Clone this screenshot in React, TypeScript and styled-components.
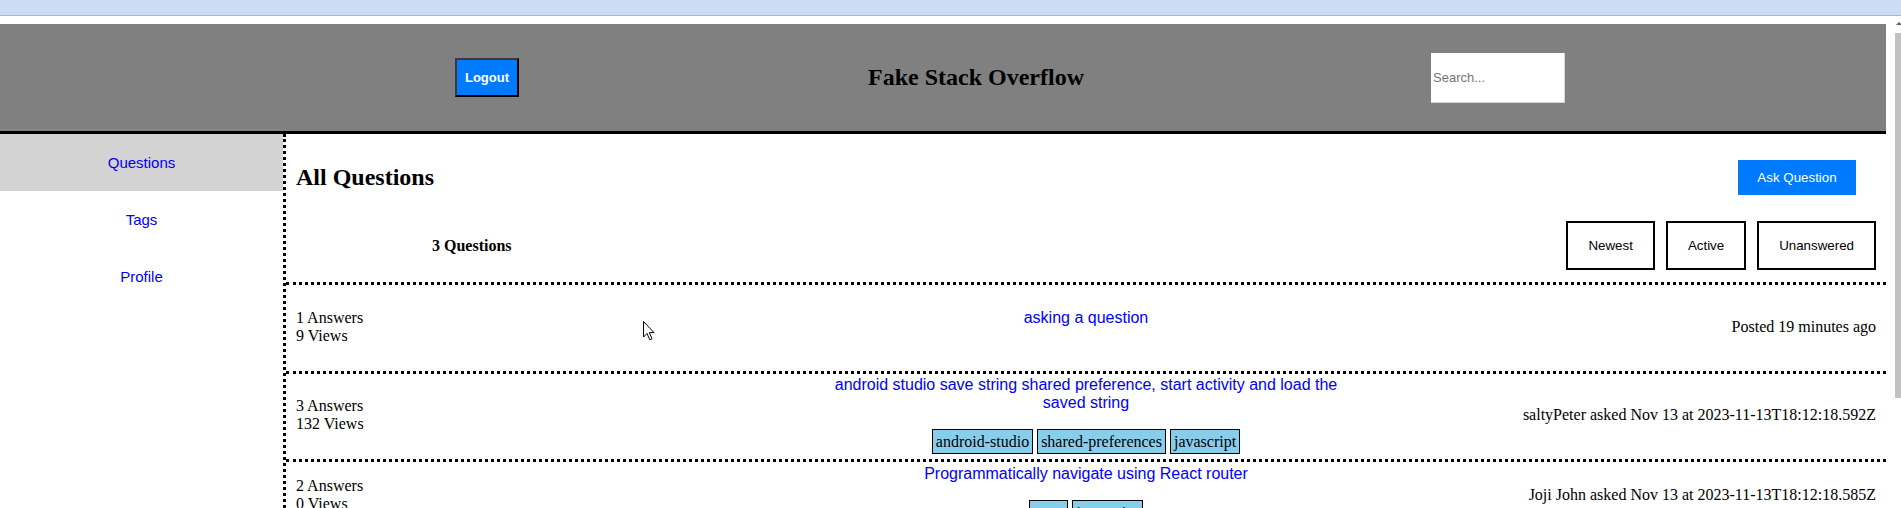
import React from "react";
import styled, { createGlobalStyle } from "styled-components";

const GlobalStyle = createGlobalStyle`
  html, body {
    margin: 0;
    padding: 0;
    overflow: hidden;
    background: #ffffff;
  }
  body {
    font-family: "Liberation Serif", "Times New Roman", serif;
    font-size: 16px;
    color: #000;
  }
  * { box-sizing: border-box; }
`;

const Window = styled.div`
  position: relative;
  height: 508px;
  display: flex;
  flex-direction: column;
  overflow: hidden;
`;

const BookmarkBar = styled.div`
  height: 16px;
  flex-shrink: 0;
  background: #cbdcf4;
  border-bottom: 1px solid #a8b8d4;
  display: flex;
  align-items: flex-start;
`;

const BookmarkBit = styled.span<{ $left: number; $color: string; $w?: number }>`
  margin-left: ${(p) => p.$left}px;
  width: ${(p) => p.$w ?? 4}px;
  height: 3px;
  background: ${(p) => p.$color};
  border-radius: 0 0 2px 2px;
`;

const Viewport = styled.div`
  flex: 1;
  min-height: 0;
  display: flex;
`;

const Page = styled.div`
  flex: 1;
  min-width: 0;
  padding-top: 8px;
  display: flex;
  flex-direction: column;
`;

const Header = styled.header`
  height: 110px;
  flex-shrink: 0;
  background: #808080;
  border-bottom: 3px solid #000;
  display: flex;
  align-items: center;
  padding-left: 455px;
`;

const LogoutButton = styled.button`
  width: 64px;
  height: 39px;
  background: #007bff;
  color: #fff;
  border: 2px solid;
  border-color: #3a3a3a #000 #000 #3a3a3a;
  font-family: "Liberation Sans", Arial, sans-serif;
  font-size: 13px;
  font-weight: bold;
  padding: 0;
`;

const SiteTitle = styled.h1`
  margin: 0 0 0 349px;
  font-size: 24px;
  font-weight: bold;
  font-family: "Liberation Serif", "Times New Roman", serif;
`;

const SearchInput = styled.input`
  margin-left: auto;
  margin-right: 321px;
  width: 134px;
  height: 50px;
  border: none;
  border-right: 1px solid #d8d8d8;
  border-bottom: 1px solid #d8d8d8;
  padding: 0 2px;
  font-family: "Liberation Sans", Arial, sans-serif;
  font-size: 13px;
  background: #fff;
  &::placeholder { color: #757575; }
`;

const Content = styled.div`
  flex: 1;
  min-height: 0;
  display: flex;
`;

const Sidebar = styled.nav`
  width: 286px;
  flex-shrink: 0;
  border-right: 3px dotted #000;
  display: flex;
  flex-direction: column;
`;

const NavItem = styled.div<{ $active?: boolean }>`
  height: 57px;
  display: flex;
  align-items: center;
  justify-content: center;
  background: ${(p) => (p.$active ? "#d3d3d3" : "transparent")};
  color: #0000ff;
  font-family: "Liberation Sans", Arial, sans-serif;
  font-size: 15px;
`;

const Main = styled.main`
  flex: 1;
  min-width: 0;
  overflow: hidden;
`;

const TopBar = styled.div`
  height: 86px;
  display: flex;
  align-items: center;
  justify-content: space-between;
  padding: 0 30px 0 10px;
`;

const PageTitle = styled.h2`
  margin: 0;
  font-size: 24px;
  font-weight: bold;
`;

const AskButton = styled.button`
  width: 118px;
  height: 35px;
  background: #007bff;
  color: #fff;
  border: none;
  padding: 0;
  font-family: "Liberation Sans", Arial, sans-serif;
  font-size: 13.33px;
`;

const FilterBar = styled.div`
  height: 65px;
  display: flex;
  align-items: center;
  padding: 1px 10px 12px;
  border-bottom: 3px dotted #000;
`;

const QuestionCount = styled.div`
  margin-left: 136px;
  font-weight: bold;
  font-size: 16px;
`;

const FilterGroup = styled.div`
  margin-left: auto;
  display: flex;
  gap: 11px;
`;

const FilterButton = styled.button`
  height: 49px;
  padding: 0 20px;
  border: 2px solid #000;
  background: #fff;
  color: #000;
  font-family: "Liberation Sans", Arial, sans-serif;
  font-size: 13.33px;
`;

const QuestionRow = styled.div<{ $tall: boolean }>`
  display: grid;
  grid-template-columns: 1fr 1fr 1fr;
  align-items: center;
  min-height: ${(p) => (p.$tall ? 89 : 72)}px;
  padding: 2px 10px 5px;
  border-bottom: 3px dotted #000;
`;

const Stats = styled.div`
  display: flex;
  flex-direction: column;
  line-height: 18px;
`;

const Middle = styled.div`
  display: flex;
  flex-direction: column;
  align-items: center;
  text-align: center;
`;

const TitleLink = styled.a`
  color: #0000ff;
  text-decoration: none;
  font-family: "Liberation Sans", Arial, sans-serif;
  font-size: 16px;
  line-height: 18px;
`;

const TagList = styled.div`
  margin-top: 17px;
  display: flex;
  gap: 4px;
  justify-content: center;
  flex-wrap: wrap;
`;

const Tag = styled.span`
  background: #87ceeb;
  border: 1px solid #000;
  padding: 2px 3px;
  line-height: 19px;
  font-size: 16px;
`;

const Meta = styled.div`
  text-align: right;
  line-height: 18px;
`;

const Scrollbar = styled.div`
  width: 15px;
  flex-shrink: 0;
  background: #fff;
  display: flex;
  flex-direction: column;
  align-items: flex-end;
  padding-top: 6px;
`;

const ScrollArrow = styled.span`
  width: 0;
  height: 0;
  border-left: 3px solid transparent;
  border-right: 3px solid transparent;
  border-bottom: 3px solid #606060;
  margin-right: -1px;
`;

const ScrollThumb = styled.div`
  margin-top: 8px;
  width: 6px;
  height: 365px;
  background: #c1c1c1;
`;

const Cursor = styled.svg`
  position: absolute;
  left: 643px;
  top: 321px;
  pointer-events: none;
`;

type Question = {
  answers: number;
  views: number;
  title: string;
  tags: string[];
  meta: string;
};

const questions: Question[] = [
  { answers: 1, views: 9, title: "asking a question", tags: [], meta: "Posted 19 minutes ago" },
  {
    answers: 3,
    views: 132,
    title:
      "android studio save string shared preference, start activity and load the saved string",
    tags: ["android-studio", "shared-preferences", "javascript"],
    meta: "saltyPeter asked Nov 13 at 2023-11-13T18:12:18.592Z",
  },
  {
    answers: 2,
    views: 0,
    title: "Programmatically navigate using React router",
    tags: ["react", "javascript"],
    meta: "Joji John asked Nov 13 at 2023-11-13T18:12:18.585Z",
  },
];

export default function App() {
  return (
    <>
      <GlobalStyle />
      <Window>
        <BookmarkBar>
          <BookmarkBit $left={6} $color="#4a90e2" />
          <BookmarkBit $left={206} $color="#333" $w={3} />
          <BookmarkBit $left={106} $color="#f5a623" />
          <BookmarkBit $left={138} $color="#9b4dff" $w={6} />
          <BookmarkBit $left={440} $color="#4a90e2" $w={3} />
          <BookmarkBit $left={250} $color="#f5a623" />
          <BookmarkBit $left={510} $color="#ff4a1a" $w={5} />
          <BookmarkBit $left={120} $color="#7b7bff" $w={8} />
          <BookmarkBit $left={250} $color="#555" $w={14} />
        </BookmarkBar>
        <Viewport>
          <Page>
            <Header>
              <LogoutButton>Logout</LogoutButton>
              <SiteTitle>Fake Stack Overflow</SiteTitle>
              <SearchInput placeholder="Search..." />
            </Header>
            <Content>
              <Sidebar>
                <NavItem $active>Questions</NavItem>
                <NavItem>Tags</NavItem>
                <NavItem>Profile</NavItem>
              </Sidebar>
              <Main>
                <TopBar>
                  <PageTitle>All Questions</PageTitle>
                  <AskButton>Ask Question</AskButton>
                </TopBar>
                <FilterBar>
                  <QuestionCount>3 Questions</QuestionCount>
                  <FilterGroup>
                    <FilterButton>Newest</FilterButton>
                    <FilterButton>Active</FilterButton>
                    <FilterButton>Unanswered</FilterButton>
                  </FilterGroup>
                </FilterBar>
                {questions.map((q) => (
                  <QuestionRow key={q.title} $tall={q.tags.length === 0}>
                    <Stats>
                      <span>{q.answers} Answers</span>
                      <span>{q.views} Views</span>
                    </Stats>
                    <Middle>
                      <TitleLink>{q.title}</TitleLink>
                      <TagList>
                        {q.tags.map((t) => (
                          <Tag key={t}>{t}</Tag>
                        ))}
                      </TagList>
                    </Middle>
                    <Meta>{q.meta}</Meta>
                  </QuestionRow>
                ))}
              </Main>
            </Content>
          </Page>
          <Scrollbar>
            <ScrollArrow />
            <ScrollThumb />
          </Scrollbar>
        </Viewport>
        <Cursor width="13" height="20" viewBox="0 0 13 20">
          <path
            d="M0.5 0.5 L0.5 16 L4 12.5 L6.8 18.8 L9 17.8 L6.3 11.6 L11 11.6 Z"
            fill="#fff"
            stroke="#000"
            strokeWidth="1"
          />
        </Cursor>
      </Window>
    </>
  );
}
